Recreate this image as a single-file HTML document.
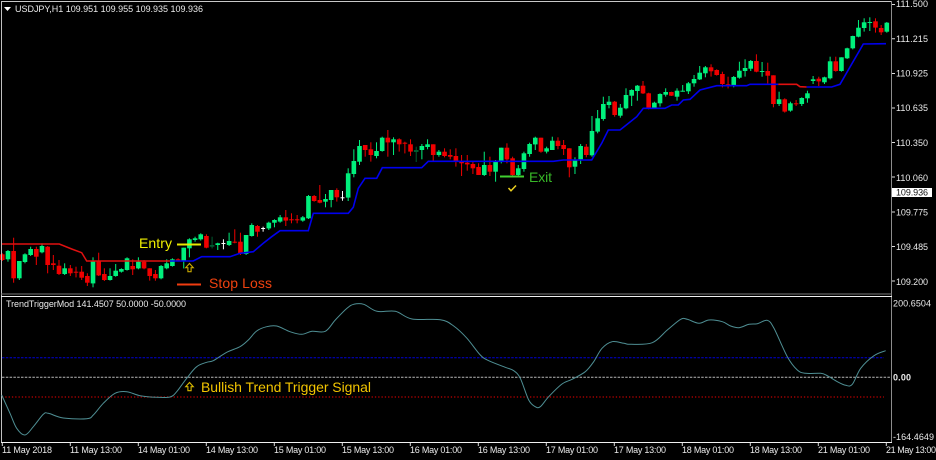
<!DOCTYPE html>
<html><head><meta charset="utf-8"><style>
html,body{margin:0;padding:0;background:#000;width:936px;height:460px;overflow:hidden}
svg{display:block}
text{font-family:"Liberation Sans",sans-serif;font-size:9px;fill:#eaeaea}
.b{font-size:14px}
</style></head><body>
<svg id="s" xmlns="http://www.w3.org/2000/svg" width="936" height="460" viewBox="0 0 936 460">
<rect width="936" height="460" fill="#000"/>
<g id="c"></g>
<polyline fill="none" stroke="#e01010" stroke-width="1.5" points="1.7,244 59.3,244 71.7,249 81.7,252.7 86.7,261 170,261"/>
<polyline fill="none" stroke="#0000ee" stroke-width="1.6" points="170,261 193.3,261 201.7,256.7 230,256.7 240,253.3 253.3,251.7 263.3,243.3 271.7,236.7 280,230.7 308.3,230.7 313.3,213.3 348.3,213.3 353.3,207.3 358.3,188.3 365,178.3 376.7,178.3 382.3,167.7 421.7,167.7 428.3,161.3 553.3,161.3 563.3,160 591.7,160 601.7,143.3 608.3,130 620,130 636.7,116.7 643.3,108.3 665,108.3 671.7,105 678.3,105 683.3,100 690,99.3 700,90 716.7,85.7 746.7,85.7 750,84.3 778.3,84.3"/>
<polyline fill="none" stroke="#e01010" stroke-width="1.6" points="778.3,84.3 796.7,84.3 800,86.7 806.7,87"/>
<polyline fill="none" stroke="#0000ee" stroke-width="1.6" points="806.7,87 831.7,87 840,84.3 863.3,44 886,43.7"/>

<rect x="1" y="1" width="891" height="1" fill="#c8c8c8"/>
<rect x="1" y="1" width="1" height="442" fill="#c0c0c0"/>
<rect x="891" y="1" width="1" height="442" fill="#8c8c8c"/>
<rect x="1" y="293.5" width="891" height="1" fill="#777"/>
<rect x="1" y="296" width="891" height="1" fill="#f0f0f0"/>
<rect x="1" y="442" width="891" height="1" fill="#f0f0f0"/>

<path d="M4 7h7l-3.5 4z" fill="#fff"/>
<text x="15" y="12" textLength="188" lengthAdjust="spacing">USDJPY,H1  109.951 109.955 109.935 109.936</text>
<text x="6" y="307" textLength="180" lengthAdjust="spacing">TrendTriggerMod 141.4507 50.0000 -50.0000</text>

<text x="896" y="7" textLength="32">111.500</text>
<text x="896" y="42" textLength="32">111.215</text>
<text x="896" y="76.500" textLength="32">110.925</text>
<text x="896" y="111" textLength="32">110.635</text>
<text x="896" y="146" textLength="32">110.350</text>
<text x="896" y="181" textLength="32">110.060</text>
<rect x="892" y="188" width="40" height="9" fill="#fff"/>
<text x="896" y="195.500" textLength="32" style="fill:#111">109.936</text>
<text x="896" y="215.500" textLength="32">109.775</text>
<text x="896" y="250" textLength="32">109.485</text>
<text x="896" y="285" textLength="32">109.200</text>
<path d="M892 4.500h3M892 38.700h3M892 73.500h3M892 108h3M892 142.500h3M892 177h3M892 212h3M892 246.500h3M892 281h3" stroke="#ddd" stroke-width="1"/>
<text x="893" y="306.500" textLength="38">200.6504</text>
<text x="893" y="380.500" textLength="18" style="font-weight:bold">0.00</text>
<text x="893" y="440" textLength="41">-164.4649</text>

<line x1="2" y1="357.700" x2="884" y2="357.700" stroke="#0000d8" stroke-width="1" stroke-dasharray="2.500 1.300"/>
<line x1="2" y1="377.300" x2="891" y2="377.300" stroke="#b8b8b8" stroke-width="1" stroke-dasharray="2.500 1.300"/>
<line x1="2" y1="397" x2="884" y2="397" stroke="#a00000" stroke-width="1.400" stroke-dasharray="1.300 2"/>
<path id="tt" fill="none" stroke="#4f8f94" stroke-width="1" d=""/>

<path d="M2.300 443v3M70.300 443v3M138.300 443v3M206.300 443v3M274.300 443v3M342.300 443v3M410.300 443v3M478.300 443v3M546.300 443v3M614.300 443v3M682.300 443v3M750.300 443v3M818.300 443v3M886.300 443v3" stroke="#ddd"/>
<text x="2" y="453" textLength="50">11 May 2018</text>
<text x="70" y="453" textLength="52">11 May 13:00</text>
<text x="138" y="453" textLength="52">14 May 01:00</text>
<text x="206" y="453" textLength="52">14 May 13:00</text>
<text x="274" y="453" textLength="52">15 May 01:00</text>
<text x="342" y="453" textLength="52">15 May 13:00</text>
<text x="410" y="453" textLength="52">16 May 01:00</text>
<text x="478" y="453" textLength="52">16 May 13:00</text>
<text x="546" y="453" textLength="52">17 May 01:00</text>
<text x="614" y="453" textLength="52">17 May 13:00</text>
<text x="682" y="453" textLength="52">18 May 01:00</text>
<text x="750" y="453" textLength="52">18 May 13:00</text>
<text x="818" y="453" textLength="52">21 May 01:00</text>
<text x="886" y="453" textLength="50">21 May 13:00</text>

<text class="b" x="139" y="248" textLength="33" style="fill:#f0f000">Entry</text>
<rect x="177" y="243.500" width="24" height="2" fill="#e8e800"/>
<rect x="177" y="283.500" width="24" height="2" fill="#f03c10"/>
<text class="b" x="209" y="288" textLength="63" style="fill:#f0420f">Stop Loss</text>
<rect x="500" y="175.500" width="24" height="2" fill="#40d030"/>
<text class="b" x="529" y="182" textLength="23" style="fill:#38b828">Exit</text>
<path d="M508.500 188l2.500 2.800 5-5.300" fill="none" stroke="#ecd020" stroke-width="1.500"/>
<path d="M189.500 263.500l-3.800 4.200h2.200v4h3.200v-4h2.200z" fill="none" stroke="#c8a800" stroke-width="1.100"/>
<path d="M189.500 382.500l-3.800 4.200h2.200v4h3.200v-4h2.200z" fill="none" stroke="#d8b800" stroke-width="1.100"/>
<text class="b" x="201" y="392" textLength="170" style="fill:#f2c400">Bullish Trend Trigger Signal</text>
</svg>
<script>
var d200="r163,180,160,183 g153,178,150,185 r153,235,113,248 g183,235,183,240 g163,186,160,190 g147,165,140,168 r147,170,140,195 g138,157,130,160 r140,195,138,220 r190,195,165,210 r197,222,180,225 g205,222,190,225 r205,220,195,228 r215,217,200,232 r215,233,198,240 r228,248,220,258 g182,250,172,262 r182,226,158,228 r222,240,205,243 g228,240,205,242 g212,228,192,230 g207,215,205,218 g175,210,172,212 r198,208,178,225 g185,205,172,208 r185,205,180,208 r205,228,205,242 r222,235,210,242 g198,235,195,238 g190,205,178,208 g178,198,175,200 r178,183,175,185 g143,183,143,205 g118,145,115,172 g115,120,110,125 g103,118,100,122 r108,143,103,145 D135,140,110,145 g130,135,128,150 w129,131,118,148 g123,135,98,138 r125,128,88,130 r125,160,98,165 g105,162,105,165 g75,108,70,110 r78,95,75,110 w84,86,80,95 g68,85,65,90 g60,68,58,82 g52,65,45,68 r52,62,30,78 r58,60,40,70 r58,60,45,70 g52,62,48,65".split(" ");
var d100="g288,355,285,357 r288,303,285,305 r300,308,255,310 g297,305,282,322 g270,300,270,322 r270,292,265,305 w292,294,273,302 g220,293,205,303 g183,222,148,232 g138,185,120,195 r135,150,135,170 r148,165,127,185 g153,168,127,175 g113,153,110,155 r113,127,90,170 g118,127,112,165 r118,133,115,155 r128,131,125,160 r133,155,118,168 D150,156,140,186 g138,150,132,178 g133,141,118,148 r133,165,133,185 g155,165,150,170 r155,168,145,172 r165,170,148,178 r168,183,145,200 r186,190,165,228 r188,193,165,212 r192,205,185,222 r201,225,190,225 g195,225,155,228 r195,215,170,228 g185,215,180,245 g143,183,143,190 r143,178,130,190 r175,225,170,228 g205,225,195,228 g160,207,155,215 g132,162,128,170 g113,133,110,150 r113,155,113,158 g145,155,140,160 g122,150,110,150 r122,138,112,148 r135,147,120,165 r145,202,145,232 g180,200,172,222 g138,178,132,192 r140,165,132,172".split(" ");
var d0="g393,466,348,470 g355,395,330,400 g312,357,290,362 g305,315,288,325 r305,345,303,350 g323,347,312,353 g285,325,265,328 g270,287,268,318 g257,273,255,302 r257,280,243,282 r280,325,278,328 g308,323,305,326 g282,310,280,320 g276,284,265,290 r276,287,275,288 g272,290,265,302 g272,274,255,275 g250,274,246,282 g237,250,225,260 g218,238,198,240 g202,220,198,232 r202,214,193,230 r210,225,208,227 r222,252,215,262 r253,258,230,265 g231,258,228,262 g212,233,185,236 g204,213,178,230 g183,206,180,213 r183,215,163,217 g213,215,186,230 r213,227,188,250 r226,312,226,322 g298,312,275,318 r298,335,295,338 g310,332,305,335 r310,313,300,318 g294,312,292,318 g280,295,272,308 g238,243,228,252 r236,244,230,258 g232,247,230,252 g184,235,170,238 r184,213,170,215 g172,213,172,215 g145,175,143,177 g108,145,107,148 g83,110,60,112 g67,84,55,95 g66,68,52,93 r64,83,55,98 r84,97,75,105 g68,95,66,98".split(" ");
var cols={g:"#00f07c",r:"#f00000",w:"#ffffff",D:"#005c30"};
var h="",idx=0;
function seg(arr,oy){for(var k=0;k<arr.length;k++){var s=arr[k],t=s[0],p=s.slice(1).split(",").map(Number),x=2.3+5.67*idx,c=cols[t];
var bt=oy+p[0]/3,bb=oy+p[1]/3,wt=oy+p[2]/3,wb=oy+p[3]/3;
h+='<rect x="'+(x-.5).toFixed(2)+'" y="'+wt.toFixed(1)+'" width="1" height="'+(wb-wt).toFixed(1)+'" fill="'+c+'"/>';
if(t!="w"){h+='<rect x="'+(x-2.3).toFixed(2)+'" y="'+bt.toFixed(1)+'" width="4.6" height="'+Math.max(bb-bt,1).toFixed(1)+'" fill="'+c+'"/>';}
else{h+='<rect x="'+(x-2).toFixed(2)+'" y="'+bt.toFixed(1)+'" width="4" height="1" fill="'+c+'"/>';}
idx++;}}
seg(d200,200);seg(d100,100);seg(d0,0);
document.getElementById("c").innerHTML=h;
function pts(l,ox){var o=[];for(var i=0;i<l.length;i+=2){o.push([ox+l[i]/3,290+l[i+1]/3]);}return o;}
var a=pts([5,315,30,370,50,415,75,435,100,410,130,373,145,370,190,384,260,386,280,375,310,340,345,310,380,305,420,317,470,322,510,321,530,305,560,265,590,230,620,217,640,212,680,187,720,170,745,150,770,123,800,110,830,108,870,125,905,133],0)
.concat(pts([0,124,40,124,70,90,105,55,125,43,155,43,195,64,250,64,300,87,385,89,425,108,465,145,505,195,530,212,580,232,605,242,625,265,650,330,670,350,685,350,710,320,750,282,780,268,820,245,845,215,870,175,900,155],312))
.concat(pts([0,160,20,163,85,158,130,120,170,88,190,88,225,100,255,90,295,95,320,108,345,113,375,103,400,101,430,91,450,115,490,200,520,240,545,250,590,250,610,257,640,275,665,286,685,283,710,235,750,197,785,182],624));
var dd="M"+a[0][0].toFixed(1)+" "+a[0][1].toFixed(1);
for(var i=0;i<a.length-1;i++){var p0=a[Math.max(i-1,0)],p1=a[i],p2=a[i+1],p3=a[Math.min(i+2,a.length-1)];
dd+="C"+(p1[0]+(p2[0]-p0[0])/6).toFixed(1)+" "+(p1[1]+(p2[1]-p0[1])/6).toFixed(1)+" "+(p2[0]-(p3[0]-p1[0])/6).toFixed(1)+" "+(p2[1]-(p3[1]-p1[1])/6).toFixed(1)+" "+p2[0].toFixed(1)+" "+p2[1].toFixed(1);}
document.getElementById("tt").setAttribute("d",dd);
</script>
</body></html>
